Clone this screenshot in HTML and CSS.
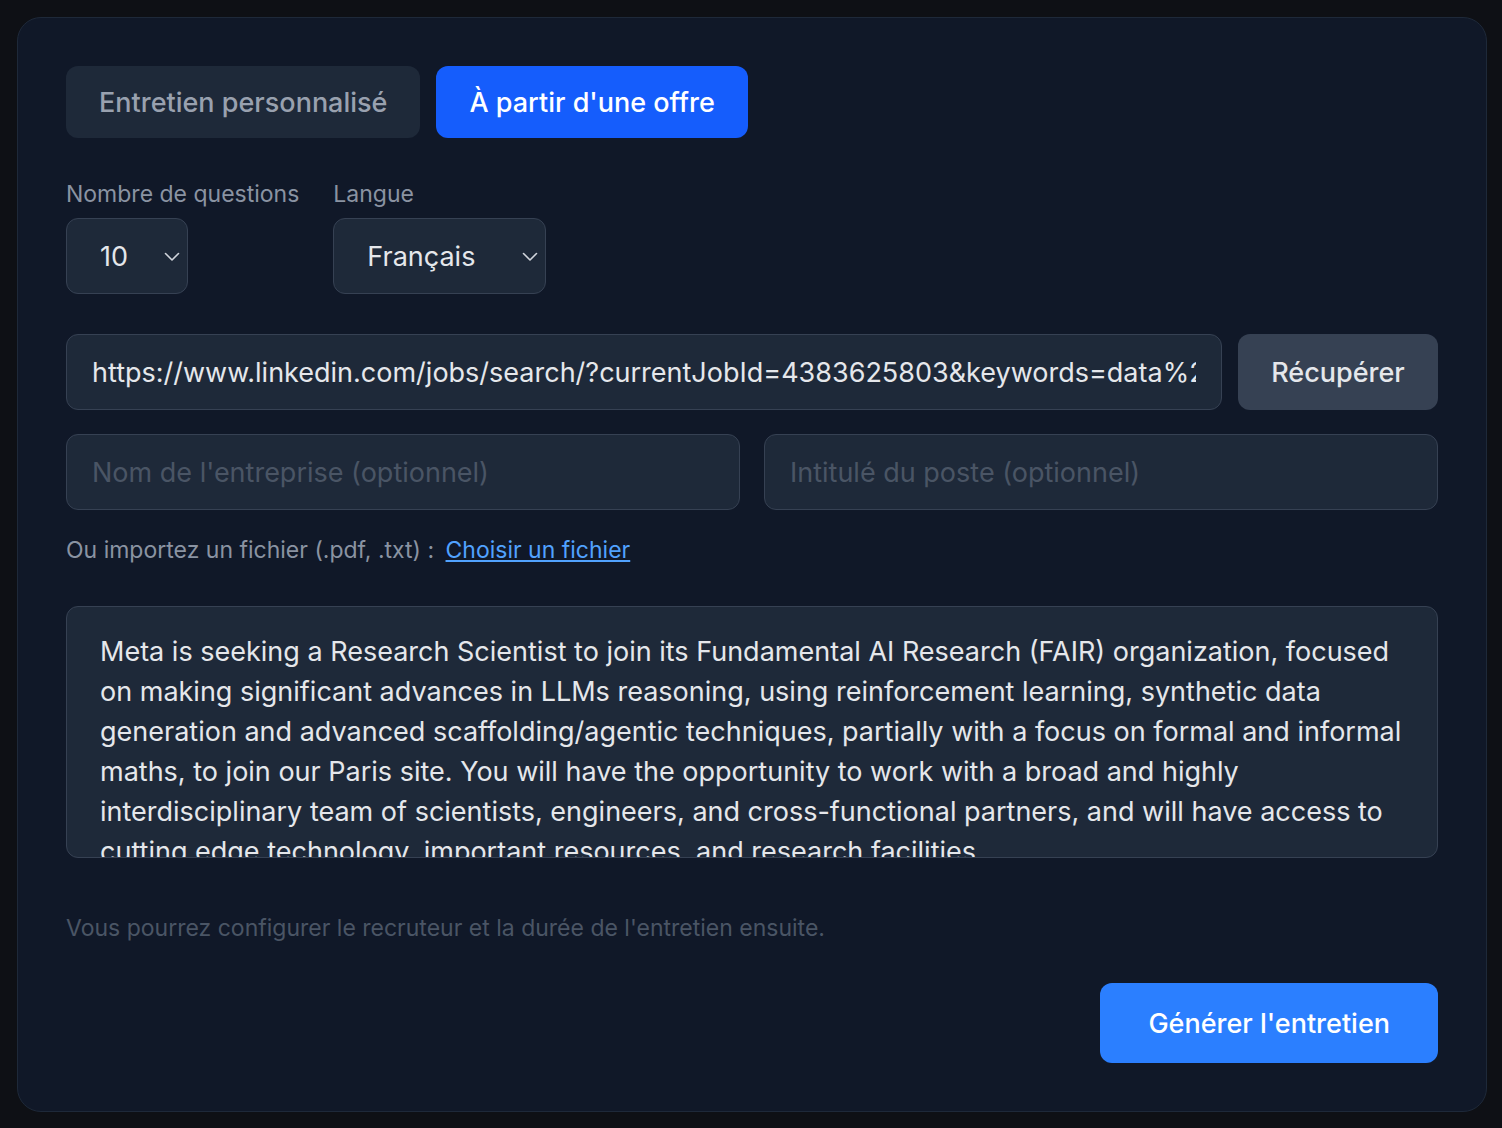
FILE: index.html
```html
<!DOCTYPE html>
<html lang="fr">
<head>
  <meta charset="UTF-8">
  <meta name="viewport" content="width=device-width, initial-scale=1.0">
  <title>Nouvel entretien</title>
  <link rel="stylesheet" href="styles.css">
</head>
<body>
  <div class="carte">
    <div class="onglets">
      <button class="onglet">Entretien personnalisé</button>
      <button class="onglet actif">À partir d'une offre</button>
    </div>

    <div class="options">
      <div class="champ">
        <label for="nb_questions">Nombre de questions</label>
        <div class="select-wrap petit">
          <select id="nb_questions">
            <option>5</option>
            <option selected>10</option>
            <option>15</option>
          </select>
          <svg class="chevron" width="16" height="10" viewBox="0 0 16 10"><path d="M1.5 1.5 L8 8 L14.5 1.5" fill="none" stroke="#d1d5dc" stroke-width="1.6" stroke-linecap="round" stroke-linejoin="round"/></svg>
        </div>
      </div>
      <div class="champ">
        <label for="langue">Langue</label>
        <div class="select-wrap moyen">
          <select id="langue">
            <option selected>Français</option>
            <option>English</option>
          </select>
          <svg class="chevron" width="16" height="10" viewBox="0 0 16 10"><path d="M1.5 1.5 L8 8 L14.5 1.5" fill="none" stroke="#d1d5dc" stroke-width="1.6" stroke-linecap="round" stroke-linejoin="round"/></svg>
        </div>
      </div>
    </div>

    <div class="ligne-url">
      <input type="text" class="entree" value="https://www.linkedin.com/jobs/search/?currentJobId=4383625803&amp;keywords=data%20scientist&amp;origin=JOBS_HOME_SEARCH_BUTTON">
      <button class="btn-recup">Récupérer</button>
    </div>

    <div class="ligne-deux">
      <input type="text" class="entree" placeholder="Nom de l'entreprise (optionnel)">
      <input type="text" class="entree" placeholder="Intitulé du poste (optionnel)">
    </div>

    <p class="import">Ou importez un fichier (.pdf, .txt) : <a href="#" class="lien">Choisir un fichier</a></p>

    <textarea class="description">Meta is seeking a Research Scientist to join its Fundamental AI Research (FAIR) organization, focused on making significant advances in LLMs reasoning, using reinforcement learning, synthetic data generation and advanced scaffolding/agentic techniques, partially with a focus on formal and informal maths, to join our Paris site. You will have the opportunity to work with a broad and highly interdisciplinary team of scientists, engineers, and cross-functional partners, and will have access to cutting edge technology, important resources, and research facilities.</textarea>

    <p class="note">Vous pourrez configurer le recruteur et la durée de l'entretien ensuite.</p>

    <div class="actions">
      <button class="btn-generer">Générer l'entretien</button>
    </div>
  </div>
</body>
</html>
```

FILE: styles.css
```css
* { box-sizing: border-box; }
body {
  margin: 0; padding: 17px 15px 17px 17px;
  background-color: #0e1015;
  font-family: Inter, "Noto Sans", sans-serif;
  color: #e5e7eb;
}
.carte {
  background: #101828; border: 1px solid #1e2939; border-radius: 24px;
  padding: 48px; height: 1095px;
  display: flex; flex-direction: column;
}
button, input, select, textarea { font-family: inherit; }

.onglets { display: flex; gap: 16px; }
.onglet {
  height: 72px; padding: 0 33px; border: none; border-radius: 12px;
  background: #1e2939; color: #99a1af; font-size: 27px; font-weight: 500; cursor: pointer;
}
.onglet.actif { background: #155dfc; color: white; }

.options { display: flex; gap: 34px; margin-top: 42px; }
.champ { display: flex; flex-direction: column; gap: 10px; }
label { font-size: 23px; color: #8a93a2; line-height: 28px; }
.select-wrap { position: relative; height: 76px; }
.select-wrap.petit { width: 122px; }
.select-wrap.moyen { width: 213px; }
select {
  appearance: none; -webkit-appearance: none;
  width: 100%; height: 100%;
  background: #1e2939; border: 1px solid #364153; border-radius: 12px;
  color: #e5e7eb; font-size: 27px; padding: 0 33px;
}
.chevron { position: absolute; right: 8px; top: 34px; pointer-events: none; }

.ligne-url { display: flex; gap: 16px; margin-top: 40px; }
.entree {
  height: 76px; background: #1e2939; border: 1px solid #364153; border-radius: 12px;
  padding: 0 25px; color: #e5e7eb; font-size: 27px; min-width: 0; outline: none;
}
.ligne-url .entree { flex: 1; }
.entree::placeholder { color: #4a5565; }
.btn-recup {
  width: 200px; height: 76px; border: none; border-radius: 12px;
  background: #364153; color: #e5e7eb; font-size: 27px; font-weight: 500;
}
.ligne-deux { display: grid; grid-template-columns: 1fr 1fr; gap: 24px; margin-top: 24px; }

.import { margin: 26px 0 0; font-size: 23px; color: #8a93a2; line-height: 28px; }
.lien { color: #51a2ff; margin-left: 5px; }

.description {
  margin-top: 42px; height: 252px; resize: none;
  background: #1e2939; border: 1px solid #364153; border-radius: 12px;
  padding: 25px 20px 0 33px; color: #e5e7eb; font-size: 27px; line-height: 40px;
  overflow: hidden; outline: none;
}
.note { margin: 56px 0 0; font-size: 23px; color: #4a5565; line-height: 28px; }

.actions { display: flex; justify-content: flex-end; margin-top: auto; }
.btn-generer {
  height: 80px; padding: 0 48px; border: none; border-radius: 12px;
  background: #2b7fff; color: white; font-size: 27px; font-weight: 500;
}
```
